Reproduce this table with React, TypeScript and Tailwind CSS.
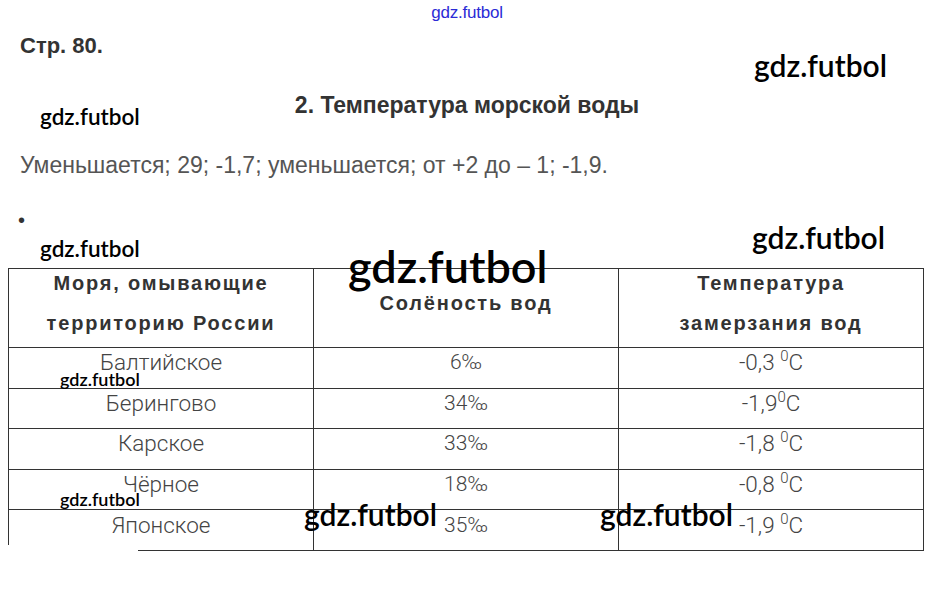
const rows = [
  { sea: 'Балтийское', salt: '6‰', t: '-0,3 ' },
  { sea: 'Берингово', salt: '34‰', t: '-1,9' },
  { sea: 'Карское', salt: '33‰', t: '-1,8 ' },
  { sea: 'Чёрное', salt: '18‰', t: '-0,8 ' },
  { sea: 'Японское', salt: '35‰', t: '-1,9 ' },
]

function Mark({ className }: { className: string }) {
  return (
    <span className={`absolute whitespace-nowrap font-['Lato',sans-serif] font-semibold text-black leading-none ${className}`}>
      gdz.futbol
    </span>
  )
}

export default function App() {
  return (
    <div className="relative w-[934px] h-[597px] overflow-hidden bg-white font-['Liberation_Sans',Arial,sans-serif]">
      <div className="h-[24px] flex items-center justify-center">
        <span className="text-[17px] leading-none text-[#2b2bd6] tracking-[-0.2px]">gdz.futbol</span>
      </div>

      <p className="mt-[10px] ml-[20px] text-[22px] leading-[24px] font-bold text-[#333]">Стр. 80.</p>

      <h2 className="mt-[35px] text-center text-[23px] leading-[24px] font-bold text-[#333]">2. Температура морской воды</h2>

      <p className="mt-[36px] ml-[20px] text-[23px] leading-[24px] text-[#555]">
        Уменьшается; 29; -1,7; уменьшается; от +2 до – 1; -1,9.
      </p>

      <p className="mt-[31px] ml-[18px] text-[20px] leading-[24px] text-[#333]">•</p>

      <table className="mt-[36px] ml-[8px] w-[915px] border-collapse text-[#333] table-fixed">
        <colgroup>
          <col className="w-[305px]" />
          <col className="w-[305px]" />
          <col className="w-[305px]" />
        </colgroup>
        <thead>
          <tr className="h-[79px]">
            <th className="border border-[#333] p-0 align-top text-center text-[20px] font-bold tracking-[1.8px]">
              <div className="-mt-[6px] leading-[40px]">Моря, омывающие<br />территорию России</div>
            </th>
            <th className="border border-[#333] p-0 align-top text-center text-[20px] font-bold tracking-[1.8px]">
              <div className="mt-[14px] leading-[40px]">Солёность вод</div>
            </th>
            <th className="border border-[#333] p-0 align-top text-center text-[20px] font-bold tracking-[1.8px]">
              <div className="-mt-[6px] leading-[40px]">Температура<br />замерзания вод</div>
            </th>
          </tr>
        </thead>
        <tbody className="font-['Roboto',sans-serif] font-light text-[#444]">
          {rows.map((r) => (
            <tr key={r.sea} className="h-[40.6px]">
              <td className="border border-[#333] text-center text-[22.5px] leading-[24px] pb-[11px]">{r.sea}</td>
              <td className="border border-[#333] text-center text-[21px] leading-[24px] pb-[11px]">{r.salt}</td>
              <td className="border border-[#333] text-center text-[22.5px] leading-[24px] pb-[11px]">
                {r.t}
                <sup className="text-[15px] -top-[9px]">0</sup>C
              </td>
            </tr>
          ))}
        </tbody>
      </table>

      <div className="absolute left-0 top-[545px] w-[138px] h-[12px] bg-white" />

      <Mark className="left-[754px] top-[50px] text-[30px]" />
      <Mark className="left-[40px] top-[106px] text-[22.5px]" />
      <Mark className="left-[40px] top-[238px] text-[22.5px]" />
      <Mark className="left-[752px] top-[222px] text-[30px]" />
      <Mark className="left-[348px] top-[244px] text-[45px]" />
      <Mark className="left-[60px] top-[370px] text-[18px]" />
      <Mark className="left-[60px] top-[490px] text-[18px]" />
      <Mark className="left-[304px] top-[499px] text-[30px]" />
      <Mark className="left-[600px] top-[499px] text-[30px]" />
    </div>
  )
}
